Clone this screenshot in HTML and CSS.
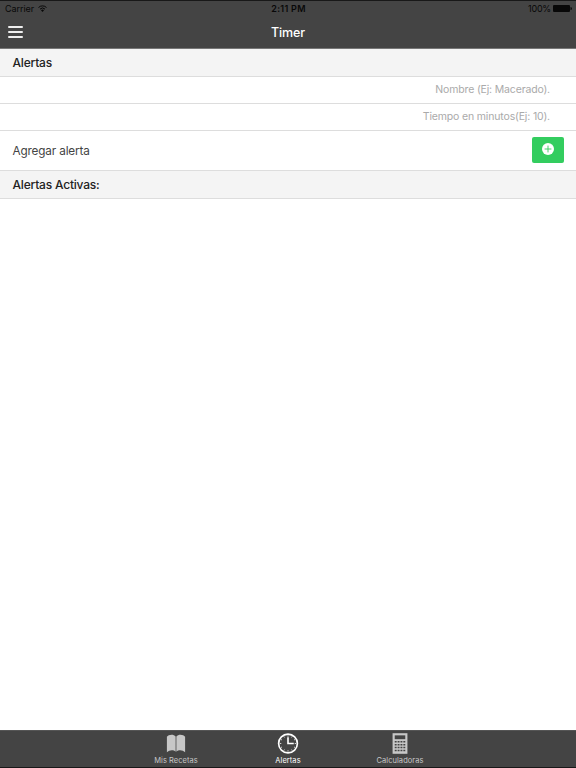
FILE: index.html
```html
<!DOCTYPE html>
<html lang="es">

<head>
    <meta charset="UTF-8">
    <meta name="viewport" content="width=device-width, initial-scale=1.0">
    <title>Timer</title>
    <link rel="stylesheet" href="styles.css">
</head>

<body>
    <header class="header">
        <div class="status-bar">
            <div class="carrier">
                <span>Carrier</span>
                <svg class="wifi" viewBox="0 0 18 14">
                    <path d="M1 5a11.5 11.5 0 0 1 16 0M4 8.2a7.2 7.2 0 0 1 10 0" fill="none" stroke="currentColor" stroke-width="2"/>
                    <path d="M6 10.5a4.2 4.2 0 0 1 6 0L9 13.8z" fill="currentColor"/>
                </svg>
            </div>
            <div class="clock">2:11 PM</div>
            <div class="battery">
                <span>100%</span>
                <svg class="battery-icon" viewBox="0 0 19 7">
                    <rect width="17" height="7" rx="1" fill="currentColor"/>
                    <path d="M17.5 2q1.5 0 1.5 1.5T17.5 5z" fill="currentColor"/>
                </svg>
            </div>
        </div>
        <div class="nav-bar">
            <button class="menu-button" aria-label="Menú">
                <span></span>
                <span></span>
                <span></span>
            </button>
            <h1 class="title">Timer</h1>
        </div>
    </header>

    <main class="content">
        <h2 class="divider">Alertas</h2>
        <label class="item item-input">
            <input type="text" placeholder="Nombre (Ej: Macerado).">
        </label>
        <label class="item item-input">
            <input type="text" placeholder="Tiempo en minutos(Ej: 10).">
        </label>
        <div class="item item-add">
            <span class="add-label">Agregar alerta</span>
            <button class="add-button" aria-label="Agregar">
                <svg viewBox="0 0 12 12">
                    <circle cx="6" cy="6" r="6" fill="#fff"/>
                    <path d="M6 2.6v6.8M2.6 6h6.8" stroke="#33cd5f" stroke-width="0.9"/>
                </svg>
            </button>
        </div>
        <h2 class="divider">Alertas Activas:</h2>
    </main>

    <nav class="tabs">
        <a class="tab">
            <svg class="tab-icon" viewBox="0 0 24 24">
                <path d="M2.5 5C4 2.4 9.5 1.8 11.6 4.6V20.5C9.500 18.400 5 18.500 2.500 21.200ZM21.500 5C20 2.400 14.500 1.800 12.400 4.600V20.500C14.500 18.400 19 18.500 21.500 21.200Z" fill="currentColor"/>
            </svg>
            <span>Mis Recetas</span>
        </a>
        <a class="tab tab-selected">
            <svg class="tab-icon" viewBox="0 0 24 24">
                <circle cx="12" cy="12" r="9.8" fill="none" stroke="currentColor" stroke-width="1.700"/>
                <path d="M12 5.500v6.500h6" fill="none" stroke="currentColor" stroke-width="1.700"/>
                <path d="M12 3.500v1.500M12 19v1.500M3.500 12H5M19 12h1.500M7.750 4.640l.6 1.040M16.250 4.640l-.6 1.040M4.640 7.750l1.040.6M19.360 7.750l-1.040.6M4.640 16.250l1.040-.6M19.360 16.250l-1.040-.6M7.750 19.360l.6-1.040M16.250 19.360l-.6-1.040" stroke="currentColor" stroke-width="0.800"/>
            </svg>
            <span>Alertas</span>
        </a>
        <a class="tab">
            <svg class="tab-icon" viewBox="0 0 24 24">
                <path d="M4.250 1.250h15.500v21.500h-15.500z" fill="currentColor"/>
                <path d="M6.500 3.500h11v4h-11z" fill="#444"/>
                <path d="M6.500 10.200h11M6.500 13.200h11M6.500 16.200h11M6.500 19.200h11" fill="none" stroke="#444" stroke-width="1.600" stroke-dasharray="2 1"/>
            </svg>
            <span>Calculadoras</span>
        </a>
    </nav>
</body>

</html>
```

FILE: styles.css
```css
* {
    box-sizing: border-box;
}

body {
    display: flex;
    flex-direction: column;
    height: 100vh;
    margin: 0;
    background: #fff;
    color: #222;
    font-family: Inter, "Liberation Sans", sans-serif;
    font-size: 12px;
    overflow: hidden;
}

button {
    margin: 0;
    padding: 0;
    border: 0;
    background: none;
}

.header {
    height: 49px;
    border-top: 1px solid #181818;
    border-bottom: 1px solid #777;
    background: #444;
}

.status-bar {
    display: grid;
    grid-template-columns: 1fr auto 1fr;
    align-items: center;
    height: 15px;
    padding: 0 4px 0 5px;
    color: #080808;
    font-size: 9px;
}

.carrier,
.battery {
    display: flex;
    align-items: center;
}

.carrier {
    gap: 4px;
    letter-spacing: -0.05px;
}

.wifi {
    width: 9px;
    height: 7px;
}

.clock {
    font-weight: 600;
    letter-spacing: 0.3px;
}

.battery {
    justify-content: flex-end;
    gap: 2px;
    letter-spacing: -0.2px;
}

.battery-icon {
    width: 19px;
    height: 7px;
}

.nav-bar {
    display: grid;
    grid-template-columns: 1fr auto 1fr;
    align-items: center;
    height: 32px;
    padding: 0 8px;
}

.menu-button {
    display: flex;
    flex-direction: column;
    justify-content: space-between;
    width: 15px;
    height: 12px;
}

.menu-button span {
    width: 15px;
    height: 2px;
    border-radius: 1px;
    background: #eee;
}

.title {
    margin: 0;
    color: #fff;
    font-size: 12.5px;
    font-weight: 500;
    letter-spacing: -0.1px;
}

.content {
    flex: 1;
}

.divider {
    height: 28px;
    margin: 0;
    padding-left: 12.5px;
    border-bottom: 1px solid #ddd;
    background: #f4f4f4;
    font-size: 12px;
    font-weight: 500;
    letter-spacing: -0.2px;
    line-height: 28px;
}

.item {
    display: flex;
    align-items: center;
    border-bottom: 1px solid #ddd;
}

.item-input {
    height: 27px;
    padding: 0 26px 1px 0;
}

.item-input input {
    width: 100%;
    padding: 0;
    border: 0;
    outline: 0;
    background: none;
    font: inherit;
    font-size: 10.5px;
    letter-spacing: -0.16px;
    text-align: right;
}

.item-input input::placeholder {
    color: #aaa;
}

.item-add {
    justify-content: space-between;
    height: 40px;
    padding: 0 12px 0 12.5px;
}

.add-label {
    color: #444;
    font-size: 11.75px;
    letter-spacing: -0.15px;
}

.add-button {
    display: flex;
    align-items: center;
    justify-content: center;
    width: 32px;
    height: 26px;
    margin-bottom: 2px;
    padding-bottom: 1px;
    border-radius: 2px;
    background: #33cd5f;
}

.add-button svg {
    width: 12px;
    height: 12px;
}

.tabs {
    display: flex;
    justify-content: center;
    height: 38px;
    border-top: 1px solid #555;
    border-bottom: 1px solid #181818;
    background: #444;
}

.tab {
    display: flex;
    flex-direction: column;
    align-items: center;
    width: 112px;
    padding-top: 1px;
    color: #c7c7c7;
    font-size: 7.5px;
    letter-spacing: 0.05px;
    line-height: 12px;
}

.tab-icon {
    width: 24px;
    height: 24px;
}

.tab-selected {
    color: #fff;
}
```
